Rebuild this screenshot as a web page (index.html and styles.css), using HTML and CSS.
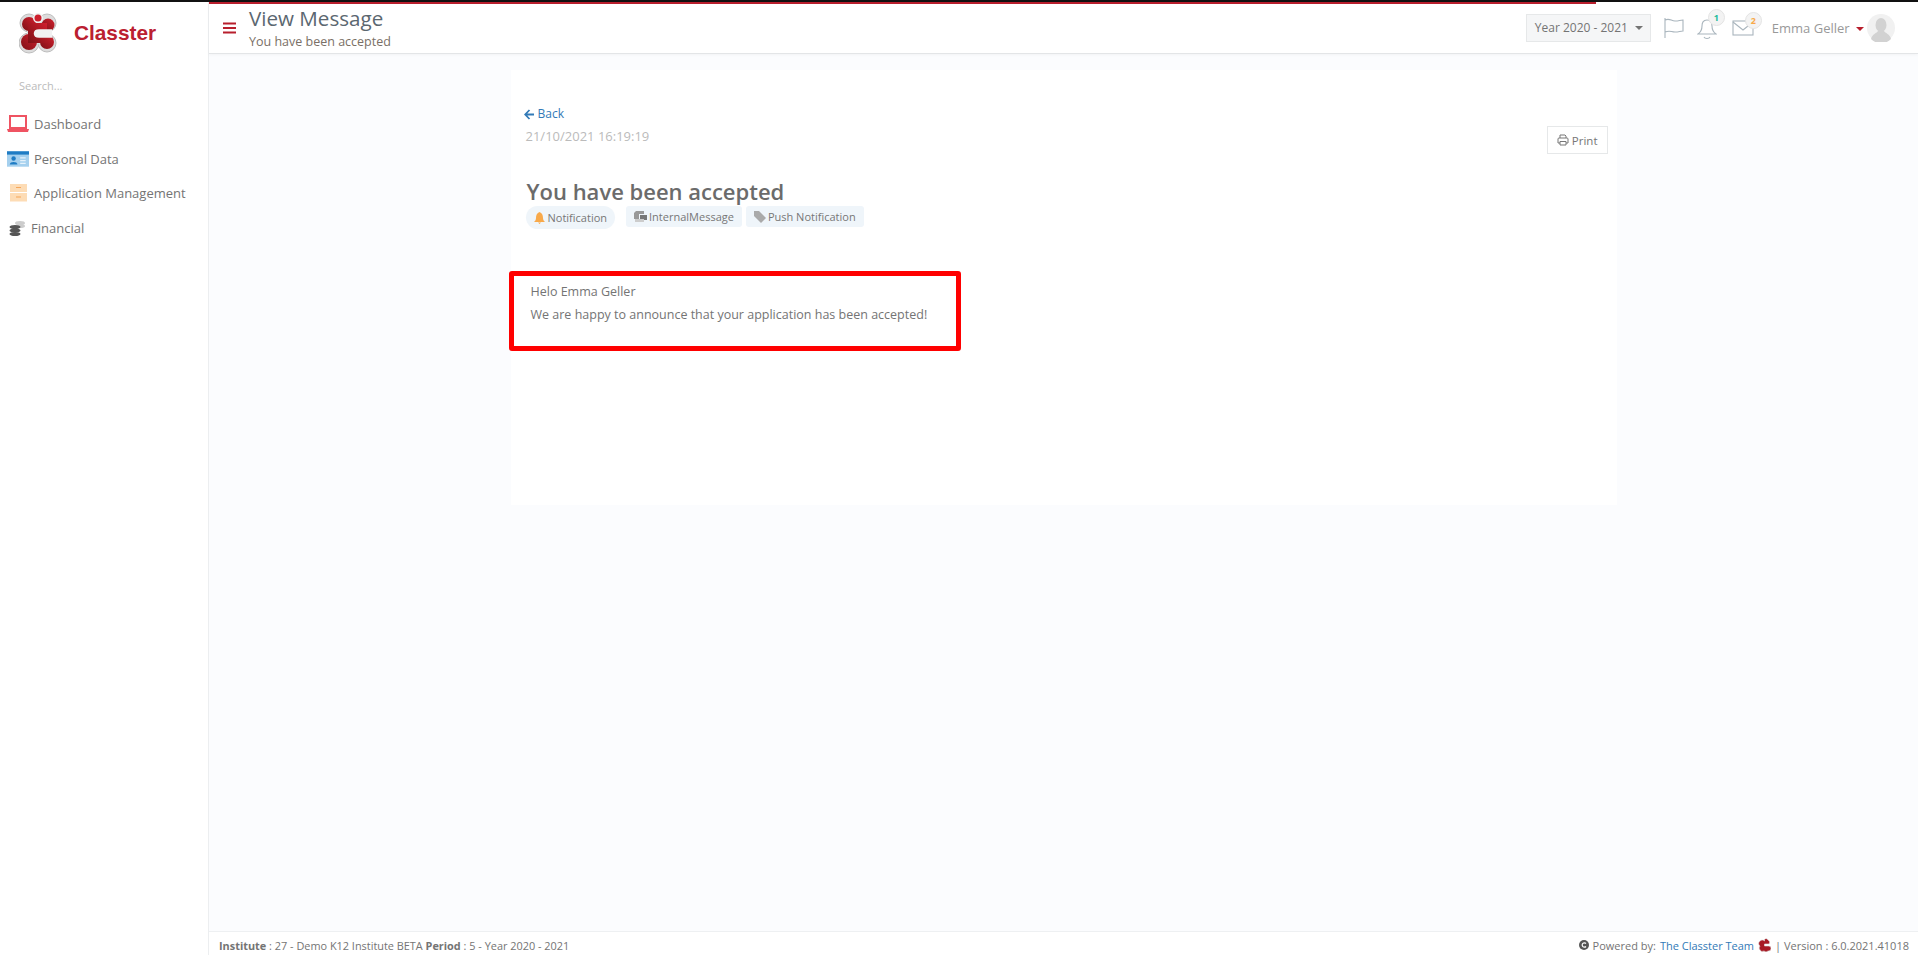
FILE: index.html
```html
<!DOCTYPE html>
<html lang="en">
<head>
  <meta charset="UTF-8">
  <title>View Message</title>
  <link rel="stylesheet" href="styles.css">
</head>
<body>
  <div class="top-line"></div>
  <div class="app">
    <aside class="sidebar">
      <div class="brand">
        <svg class="logo" width="38" height="42" viewBox="0 0 38 42">
          <defs>
            <linearGradient id="logo-red" x1="0" y1="1" x2="1" y2="0">
              <stop offset="0" stop-color="#7d1015"/>
              <stop offset="1" stop-color="#d0202e"/>
            </linearGradient>
          </defs>
          <g fill="#dcdcdc" stroke="#bdbdbd">
            <circle cx="10" cy="11" r="9"/>
            <circle cx="28" cy="11" r="9"/>
            <circle cx="10" cy="31" r="10"/>
            <circle cx="28" cy="31" r="9"/>
            <rect x="8" y="10" width="22" height="22" stroke="none"/>
          </g>
          <g fill="url(#logo-red)">
            <circle cx="10" cy="12" r="7"/>
            <circle cx="29" cy="13" r="6.500"/>
            <circle cx="10" cy="30" r="8"/>
            <circle cx="28" cy="30" r="7"/>
            <rect x="9" y="11" width="19" height="20"/>
          </g>
          <path d="M33 19.500H20q-3 0-3 2t3 2H33" fill="none" stroke="#f1f1f1" stroke-width="4.500"/>
          <circle cx="19" cy="6" r="5" fill="#f1f1f1"/>
          <circle cx="19" cy="6" r="3.500" fill="#cc1f2d"/>
        </svg>
        <span class="brand-name">Classter</span>
      </div>
      <div class="search">Search...</div>
      <nav class="menu">
        <a class="menu-item">
          <svg class="menu-icon" width="22" height="18" viewBox="0 0 22 18"><rect x="3" y="1" width="16" height="12" fill="#fff" stroke="#ef5362" stroke-width="2"/><path d="M0 14h22l-1 3H1z" fill="#ef5362"/></svg>
          <span>Dashboard</span>
        </a>
        <a class="menu-item">
          <svg class="menu-icon" width="22" height="18" viewBox="0 0 20 16"><rect y="1" width="20" height="14" fill="#a5d0ee"/><rect y="1" width="20" height="3" fill="#1f7cc4"/><circle cx="6" cy="7.500" r="2" fill="#1f7cc4"/><path d="M2.500 13c0-3 7-3 7 0z" fill="#1f7cc4"/><path d="M12 7h5M12 9.500h5M12 12h5" stroke="#e6f2fb"/></svg>
          <span>Personal Data</span>
        </a>
        <a class="menu-item">
          <svg class="menu-icon" width="22" height="18" viewBox="0 0 22 18"><rect x="3" y="0" width="17" height="8" fill="#fddcb5"/><rect x="3" y="9" width="17" height="8.500" fill="#fddcb5"/><path d="M9 3.500h5M9 13h5" stroke="#f5a65b" stroke-width="1.200"/></svg>
          <span>Application Management</span>
        </a>
        <a class="menu-item menu-item-tight">
          <svg class="menu-icon-small" width="16" height="16" viewBox="0 0 16 16"><ellipse cx="11" cy="3" rx="5" ry="2" fill="#ccc"/><ellipse cx="11" cy="6" rx="5" ry="2" fill="#ccc"/><ellipse cx="6" cy="7" rx="5.500" ry="2" fill="#555"/><ellipse cx="6" cy="10.500" rx="5.500" ry="2" fill="#555"/><ellipse cx="6" cy="14" rx="5.500" ry="2" fill="#555"/></svg>
          <span>Financial</span>
        </a>
      </nav>
    </aside>
    <div class="main">
      <header class="header">
        <div class="progress"></div>
        <svg class="burger" width="13" height="12" viewBox="0 0 13 12"><path d="M0 1.500h13M0 6h13M0 10.500h13" stroke="#b81f2d" stroke-width="2"/></svg>
        <div class="titles">
          <div class="page-title">View Message</div>
          <div class="page-sub">You have been accepted</div>
        </div>
        <div class="header-right">
          <div class="year-select">Year 2020 - 2021 <i class="caret"></i></div>
          <svg class="flag" width="22" height="22" viewBox="0 0 22 22" fill="none" stroke="#a9b5bd" stroke-width="1.100"><path d="M2 1v20M2 3c5-2 6 1 10 1s5-1 8-1v11c-3 0-4 1-8 1s-5-2-10 0"/></svg>
          <div class="notify notify-bell">
            <svg width="20" height="24" viewBox="0 0 20 24" fill="none" stroke="#a9b5bd" stroke-width="1.100"><path d="M10 4c-4 0-5 3-5 6 0 4-1 6-4 8h18c-3-2-4-4-4-8 0-3-1-6-5-6zM7 21c1 2 5 2 6 0"/></svg>
            <span class="badge badge-green">1</span>
          </div>
          <div class="notify notify-mail">
            <svg width="22" height="18" viewBox="0 0 22 18" fill="none" stroke="#a9b5bd" stroke-width="1.100"><rect x="1" y="2" width="20" height="14"/><path d="M1 3l10 8 10-8"/></svg>
            <span class="badge badge-orange">2</span>
          </div>
          <div class="user">Emma Geller <i class="caret caret-red"></i></div>
          <svg class="avatar" width="28" height="28" viewBox="0 0 28 28"><circle cx="14" cy="14" r="14" fill="#f1f1f1"/><ellipse cx="14" cy="11" rx="5.500" ry="7" fill="#d2d2d2"/><path d="M4 25c1-5 6-6 7-8h6c1 2 6 3 7 8a14 14 0 0 1-20 0z" fill="#d2d2d2"/></svg>
        </div>
      </header>
      <main class="content">
        <section class="card">
          <a class="back">
            <svg width="10" height="11" viewBox="0 0 10 11" fill="none" stroke="#337ab7" stroke-width="1.800"><path d="M5.500 1L1.200 5.500 5.500 10M2 5.500h8"/></svg>
            Back
          </a>
          <div class="date-row">
            <div class="date">21/10/2021 16:19:19</div>
            <div class="print">
              <svg width="12" height="12" viewBox="0 0 12 12" fill="none" stroke="#777"><path d="M3 4V1h5l1 1v2M3 9H1V5q0-1 1-1h8q1 0 1 1v4H9M3 7.500h6V11H3z"/></svg>
              Print
            </div>
          </div>
          <h1 class="subject">You have been accepted</h1>
          <div class="tags">
            <span class="tag tag-round">
              <svg width="11" height="12" viewBox="0 0 11 12"><path d="M5.500 0C3 1 2 3 2 6c0 2-1 3-2 4h11c-1-1-2-2-2-4 0-3-1-5-3.500-6zM4 10.500h3L5.500 12z" fill="#f8a94a"/></svg>
              Notification
            </span>
            <span class="tag">
              <svg width="13" height="11" viewBox="0 0 13 11"><path d="M2 0h8v3H5v5H0V2z" fill="#999"/><rect x="6" y="4" width="7" height="5" fill="#777"/><rect x="1" y="8" width="9" height="3" fill="#ccc"/></svg>
              InternalMessage
            </span>
            <span class="tag">
              <svg width="12" height="12" viewBox="0 0 12 12"><path d="M0 0h5l7 7-5 5-7-7z" fill="#aaa"/></svg>
              Push Notification
            </span>
          </div>
          <div class="message">
            <p>Helo Emma Geller</p>
            <p>We are happy to announce that your application has been accepted!</p>
          </div>
        </section>
      </main>
      <footer class="footer">
        <div class="footer-left"><b>Institute</b> : 27 - Demo K12 Institute BETA <b>Period</b> : 5 - Year 2020 - 2021</div>
        <div class="footer-right">
          <svg width="10" height="10" viewBox="0 0 10 10"><circle cx="5" cy="5" r="5" fill="#555"/><path d="M7 3.500a2.200 2.200 0 1 0 0 3" fill="none" stroke="#fff" stroke-width="1.200"/></svg>
          Powered by: <a class="footer-link">The Classter Team</a>
          <svg class="footer-logo" width="13" height="14" viewBox="0 0 13 14"><path d="M6.500 1.500A2 2 0 0 1 10 2a2.500 2.500 0 0 1 1 4H6.500v2H11a2.500 2.500 0 0 1-1 5 3 3 0 0 1-4 0 3 3 0 0 1-4-1 3 3 0 0 1 0-4 3 3 0 0 1 0-5 3 3 0 0 1 4.500 0z" fill="#a81a24" stroke="#ddd" stroke-width=".6"/></svg>
          | Version : 6.0.2021.41018
        </div>
      </footer>
    </div>
  </div>
</body>
</html>
```
FILE: styles.css
```css
* {
  box-sizing: border-box;
}

body {
  font-family: "Open Sans", sans-serif;
  margin: 0;
  height: 955px;
  overflow: hidden;
  color: #747474;
  background-color: #fff;
}

.top-line {
  height: 2px;
  background: #111;
}

.app {
  display: flex;
  height: 953px;
}

/* sidebar */
.sidebar {
  width: 209px;
  flex-shrink: 0;
  background: #fff;
  border-right: 1px solid #eceef0;
}

.brand {
  display: flex;
  align-items: center;
  height: 52px;
  padding: 10px 0 0 19px;
  gap: 17px;
}

.brand-name {
  font-family: "Liberation Sans", Arial, sans-serif;
  font-weight: bold;
  font-size: 20.800px;
  color: #bb2030;
}

.search {
  margin: 24px 0 0 19px;
  font-size: 11px;
  line-height: 15px;
  color: #bbb;
}

.menu {
  margin-top: 14px;
}

.menu-item {
  display: flex;
  align-items: center;
  height: 34.500px;
  padding-left: 7px;
  font-size: 13px;
  color: #747474;
  gap: 5px;
}

.menu-icon {
  flex-shrink: 0;
}

.menu-item-tight {
  padding-left: 9px;
  gap: 6px;
}

/* header */
.main {
  flex: 1;
  display: flex;
  flex-direction: column;
  min-width: 0;
  background: #fbfcfe;
}

.header {
  position: relative;
  display: flex;
  align-items: center;
  height: 52px;
  flex-shrink: 0;
  padding: 0 23px 0 14px;
  background: #fff;
  border-bottom: 1px solid #e3e5e7;
  box-shadow: 0 1px 3px rgba(0, 0, 0, 0.04);
}

.progress {
  position: absolute;
  top: 0;
  left: 0;
  width: 1387px;
  height: 2px;
  background: #b81f2d;
}

.burger {
  margin-right: 13px;
}

.page-title {
  font-size: 20.600px;
  line-height: 25px;
  color: #5b6770;
}

.page-sub {
  margin-top: 3px;
  font-size: 12.500px;
  line-height: 16px;
  color: #7a6f66;
}

.titles {
  margin-top: 0;
}

.header-right {
  display: flex;
  align-items: center;
  margin-left: auto;
}

.year-select {
  display: flex;
  align-items: center;
  gap: 7px;
  height: 28px;
  width: 125px;
  padding-left: 8px;
  font-size: 12px;
  color: #747474;
  background: #f5f6f7;
  border: 1px solid #e6e8e9;
}

.caret {
  display: inline-block;
  width: 0;
  height: 0;
  border: 4px solid transparent;
  border-top-color: #747474;
  border-bottom-width: 0;
  vertical-align: middle;
}

.caret-red {
  border-top-color: #b81f2d;
  margin-left: 3px;
}

.flag {
  margin-left: 12px;
}

.notify {
  position: relative;
  margin-left: 12px;
  display: flex;
}

.notify-mail {
  margin-left: 15px;
  width: 22px;
}

.notify-bell {
  width: 20px;
}

.badge {
  position: absolute;
  top: -7px;
  right: -8px;
  width: 17px;
  height: 17px;
  border-radius: 50%;
  background: #f3f3f3;
  border: 1px solid #e4e4e4;
  font-size: 9px;
  font-weight: bold;
  line-height: 15px;
  text-align: center;
}

.badge-green {
  color: #1abc9c;
}

.badge-orange {
  color: #f8a94a;
}

.user {
  margin-left: 18px;
  font-size: 13px;
  color: #999;
  white-space: nowrap;
}

.avatar {
  margin-left: 3px;
}

/* card */
.content {
  flex: 1;
  padding-top: 16px;
}

.card {
  width: 1106px;
  height: 435px;
  margin: 0 auto;
  padding: 36px 9px 0 13px;
  background: #fff;
}

.back {
  display: flex;
  align-items: center;
  gap: 4px;
  font-size: 12px;
  line-height: 16px;
  color: #337ab7;
}

.date-row {
  display: flex;
  justify-content: space-between;
  align-items: flex-start;
  padding-left: 2px;
}

.date {
  margin-top: 6px;
  font-size: 13px;
  line-height: 16px;
  color: #bbb;
}

.print {
  display: flex;
  align-items: center;
  gap: 3px;
  margin-top: 4px;
  height: 28px;
  padding: 0 9px;
  font-size: 11.500px;
  color: #777;
  border: 1px solid #e6e8e9;
}

.subject {
  margin: 22px 0 0 3px;
  font-size: 22px;
  line-height: 30px;
  font-weight: 600;
  color: #6b6b6b;
}

.tags {
  display: flex;
  align-items: flex-start;
  margin: 0 0 0 2px;
  gap: 4px;
}

.tag {
  display: flex;
  align-items: center;
  gap: 2px;
  height: 21px;
  padding: 0 8px;
  font-size: 11px;
  color: #777;
  background: #eff5fa;
  border-radius: 3px;
}

.tag-round {
  gap: 3px;
  height: 23px;
  margin-right: 7px;
  border-radius: 12px;
}

.message {
  width: 452px;
  height: 80px;
  margin: 42px 0 0 -15px;
  padding: 8px 17px;
  border: 5px solid #f00;
  border-radius: 3px;
  font-size: 12.500px;
  color: #747474;
}

.message p {
  margin: 0 0 7px;
  line-height: 16px;
}

/* footer */
.footer {
  display: flex;
  justify-content: space-between;
  align-items: center;
  height: 24px;
  flex-shrink: 0;
  padding: 3px 9px 0 10px;
  font-size: 11px;
  color: #747474;
  background: #fff;
  border-top: 1px solid #eef0f2;
}

.footer-left {
  font-size: 10.900px;
}

.footer-right {
  display: flex;
  align-items: center;
  gap: 4px;
}

.footer-link {
  color: #337ab7;
}
```
